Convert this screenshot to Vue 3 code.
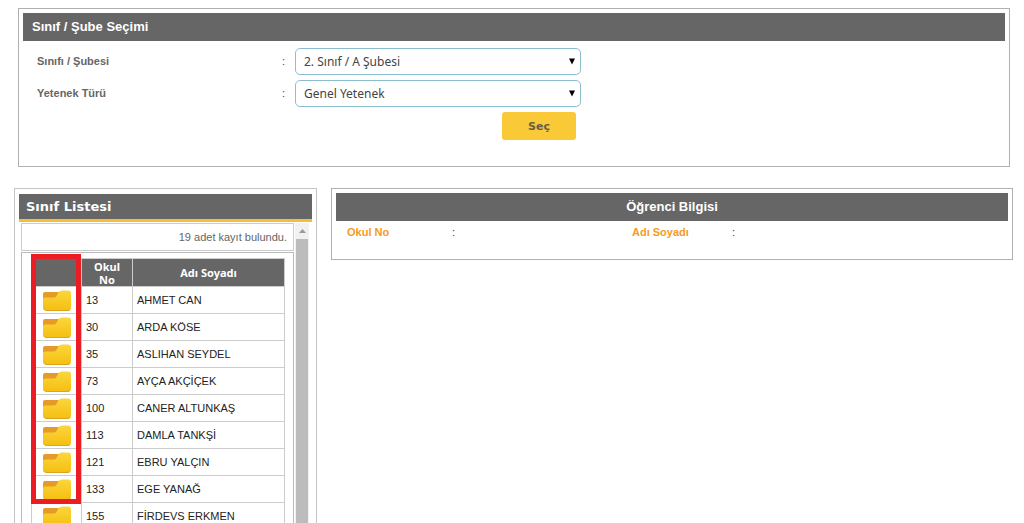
<script setup>
import { ref } from 'vue'

const sinif = ref('2. Sınıf / A Şubesi')
const yetenek = ref('Genel Yetenek')
const students = [
  { no: 13, name: 'AHMET CAN' },
  { no: 30, name: 'ARDA KÖSE' },
  { no: 35, name: 'ASLIHAN SEYDEL' },
  { no: 73, name: 'AYÇA AKÇİÇEK' },
  { no: 100, name: 'CANER ALTUNKAŞ' },
  { no: 113, name: 'DAMLA TANKŞİ' },
  { no: 121, name: 'EBRU YALÇIN' },
  { no: 133, name: 'EGE YANAĞ' },
  { no: 155, name: 'FİRDEVS ERKMEN' }
]
</script>

<template>
  <main class="page">
    <form class="panel filter" @submit.prevent>
      <h2 class="bar">Sınıf / Şube Seçimi</h2>
      <div class="fields">
        <div class="field">
          <label for="sinif">Sınıfı / Şubesi</label>
          <span class="colon">:</span>
          <div class="select">
            <select id="sinif" v-model="sinif">
              <option>2. Sınıf / A Şubesi</option>
            </select>
            <svg class="arrow" viewBox="0 0 6 7" aria-hidden="true"><path d="M0 0.5H6L3 6.5Z" /></svg>
          </div>
        </div>
        <div class="field">
          <label for="yetenek">Yetenek Türü</label>
          <span class="colon">:</span>
          <div class="select">
            <select id="yetenek" v-model="yetenek">
              <option>Genel Yetenek</option>
            </select>
            <svg class="arrow" viewBox="0 0 6 7" aria-hidden="true"><path d="M0 0.5H6L3 6.5Z" /></svg>
          </div>
        </div>
        <div class="actions"><button class="submit" type="submit">Seç</button></div>
      </div>
    </form>

    <div class="columns">
      <section class="panel list">
        <h2 class="list-title">Sınıf Listesi</h2>
        <div class="scroller">
          <div class="content">
            <p class="count">19 adet kayıt bulundu.</p>
            <div class="table-box">
              <div class="table-wrap">
                <table>
                  <thead>
                    <tr>
                      <th class="c-open"></th>
                      <th class="c-no">Okul No</th>
                      <th>Adı Soyadı</th>
                    </tr>
                  </thead>
                  <tbody>
                    <tr v-for="s in students" :key="s.no">
                      <td class="c-open">
                        <button class="folder" type="button" :aria-label="s.name">
                          <svg viewBox="0 0 28 21" aria-hidden="true">
                            <defs>
                              <linearGradient :id="'f' + s.no" x1="0" y1="0" x2="0" y2="1">
                                <stop offset="0" stop-color="#fbd63c" />
                                <stop offset="1" stop-color="#f5bf12" />
                              </linearGradient>
                            </defs>
                            <path d="M0 4Q0 2 2 2H16V9H0Z" fill="#e69a28" />
                            <path d="M0 18V9Q0 7.500 2 7.500H11Q13 7.500 14 5L15.500 2Q17 0.500 19 0.500H25Q28 0.500 28 3.500V17Q28 20.500 25 20.500H3Q0 20.500 0 18Z" :fill="'url(#f' + s.no + ')'" />
                            <path d="M0.500 18.500Q1.500 21 4 21H25Q27 21 27.500 18.500Q26 20 24 20H4Q2 20 0.500 18.500Z" fill="#dda322" />
                          </svg>
                        </button>
                      </td>
                      <td class="c-no">{{ s.no }}</td>
                      <td>{{ s.name }}</td>
                    </tr>
                  </tbody>
                </table>
                <div class="highlight"></div>
              </div>
            </div>
          </div>
          <div class="track" aria-hidden="true">
            <svg class="up" viewBox="0 0 7 4"><path d="M0 4L3.500 0L7 4Z" /></svg>
            <div class="thumb"></div>
          </div>
        </div>
      </section>

      <section class="panel info">
        <h2 class="bar centered">Öğrenci Bilgisi</h2>
        <dl>
          <dt>Okul No</dt>
          <dd>:</dd>
          <dt>Adı Soyadı</dt>
          <dd>:</dd>
        </dl>
      </section>
    </div>
  </main>
</template>

<style>
html,
body {
  background: #fff;
  overflow: hidden;
}
</style>

<style scoped>
* {
  box-sizing: border-box;
}
.page {
  padding: 8px 11px 0 14px;
  font-family: "Liberation Sans", Arial, sans-serif;
  font-size: 11px;
  color: #444;
}
h2,
p,
dl,
dd {
  margin: 0;
}
.panel {
  border: 1px solid #b0b0b0;
  padding: 4px;
}
.filter {
  margin: 0 3px 0 4px;
  min-height: 159px;
}
.bar {
  height: 28px;
  padding-left: 9px;
  background: #666;
  color: #fff;
  font-size: 13px;
  line-height: 28px;
}
.centered {
  padding-left: 0;
  text-align: center;
}
.fields {
  display: flex;
  flex-direction: column;
  gap: 5px;
  padding: 7px 0 0 14px;
}
.field {
  display: flex;
}
.field label {
  width: 245px;
  line-height: 27px;
  font-weight: bold;
  color: #666;
}
.colon {
  width: 13px;
  line-height: 27px;
}
.select {
  position: relative;
  width: 286px;
}
select {
  display: block;
  width: 100%;
  height: 27px;
  padding: 0 20px 0 8px;
  border: 1px solid #8dbdd0;
  border-radius: 5px;
  background: #fff;
  appearance: none;
  font-family: "Noto Sans", Tahoma, sans-serif;
  font-size: 12px;
  color: #444;
}
.arrow {
  position: absolute;
  right: 6px;
  top: 10px;
  width: 6px;
  height: 7px;
  fill: #000;
}
.actions {
  padding-left: 465px;
}
.submit {
  display: block;
  width: 74px;
  height: 28px;
  padding: 0;
  border: 0;
  border-radius: 3px;
  background: #fac938;
  font-family: "DejaVu Sans", Verdana, sans-serif;
  font-size: 11px;
  font-weight: bold;
  color: #666044;
}
.columns {
  display: flex;
  align-items: flex-start;
  gap: 14px;
  margin-top: 21px;
}
.list {
  width: 303px;
  flex: none;
  border-color: #c4c4c4;
  padding: 5px 4px;
}
.list-title {
  height: 28px;
  padding-left: 7px;
  background: #666;
  border-bottom: 3px solid #f4bd3a;
  color: #fff;
  font-family: "DejaVu Sans", Verdana, sans-serif;
  font-size: 13px;
  line-height: 25px;
}
.scroller {
  display: flex;
  gap: 1px;
  margin: 1px 3px 0 2px;
}
.content {
  flex: 1;
}
.count {
  height: 28px;
  padding-right: 6px;
  border: 1px solid #ccc;
  line-height: 26px;
  text-align: right;
  color: #666;
}
.table-box {
  margin-top: 1px;
  padding: 5px 8px 10px 9px;
  border: 1px solid #bbb;
}
.table-wrap {
  position: relative;
}
table {
  width: 100%;
  border-collapse: collapse;
  table-layout: fixed;
}
th,
td {
  border: 1px solid #ccc;
  padding: 0 4px;
}
th {
  height: 28px;
  background: #666;
  color: #fff;
  font-family: "Noto Sans", Tahoma, sans-serif;
  font-size: 11px;
  line-height: 13px;
}
td {
  height: 27px;
  color: #222;
}
.c-open {
  width: 50px;
}
.c-no {
  width: 51px;
}
th.c-no {
  padding: 0 10px;
}
.folder {
  display: block;
  margin: 1px auto 0;
  padding: 0;
  border: 0;
  background: none;
}
.folder svg {
  display: block;
  width: 28px;
  height: 21px;
}
.highlight {
  position: absolute;
  left: 0;
  top: -4px;
  width: 50px;
  height: 250px;
  border: 5px solid #ec1c24;
}
.track {
  width: 14px;
  padding: 6px 1px 0;
  background: #f1f1f1;
}
.up {
  display: block;
  width: 7px;
  height: 4px;
  margin: 0 auto 6px;
  fill: #999;
}
.thumb {
  height: 300px;
  background: #bcbcbc;
}
.info {
  flex: 1;
  min-height: 72px;
}
dl {
  display: grid;
  grid-template-columns: 105px 180px 100px 1fr;
  padding: 3px 0 0 11px;
  line-height: 16px;
}
dt {
  font-weight: bold;
  color: #f79a24;
}
</style>
